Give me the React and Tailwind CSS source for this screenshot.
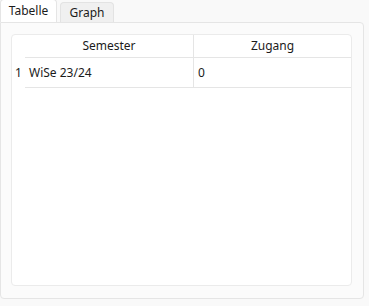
import React from "react";

const rows = [{ id: 1, semester: "WiSe 23/24", zugang: "0" }];

const App = () => {
  return (
    <div
      className="w-[369px] h-[306px] bg-[#f9f9f9] text-[12px] text-[#1b1b1b] overflow-hidden"
      style={{ fontFamily: '"Noto Sans", "Open Sans", sans-serif' }}
    >
      {/* Tab bar */}
      <div className="flex items-end h-[22px]">
        <div className="relative z-10 h-[23px] w-[57px] bg-white border border-b-0 border-[#e5e5e5] rounded-t-[4px] flex items-center justify-center leading-none pb-[1px]">
          Tabelle
        </div>
        <div className="ml-[3px] h-[20px] w-[54px] bg-[#f0f0f0] border border-b-0 border-[#e3e3e3] rounded-t-[4px] flex items-center justify-center leading-none">
          Graph
        </div>
      </div>

      {/* Tab pane */}
      <div className="w-[364px] h-[277px] bg-[#fbfbfb] border border-[#e5e5e5] rounded-b-[4px] rounded-tr-[4px] pt-[11px] pl-[10px]">
        <div className="w-[341px] h-[252px] bg-white border border-[#ebebeb] rounded-[4px] flex flex-col">
          {/* Header */}
          <div className="flex h-[23px]">
            <div className="w-[13px]"></div>
            <div className="w-[169px] border-b border-[#e5e5e5] border-r flex items-center justify-center">
              Semester
            </div>
            <div className="flex-1 border-b border-[#e5e5e5] flex items-center justify-center">
              Zugang
            </div>
          </div>
          {rows.map((r) => (
            <div key={r.id} className="flex h-[30px]">
              <div className="w-[13px] flex items-center justify-center">{r.id}</div>
              <div className="w-[169px] border-b border-r border-[#e5e5e5] flex items-center pl-[4px]">
                {r.semester}
              </div>
              <div className="flex-1 border-b border-[#e5e5e5] flex items-center pl-[4px]">
                {r.zugang}
              </div>
            </div>
          ))}
        </div>
      </div>
    </div>
  );
};

export default App;
